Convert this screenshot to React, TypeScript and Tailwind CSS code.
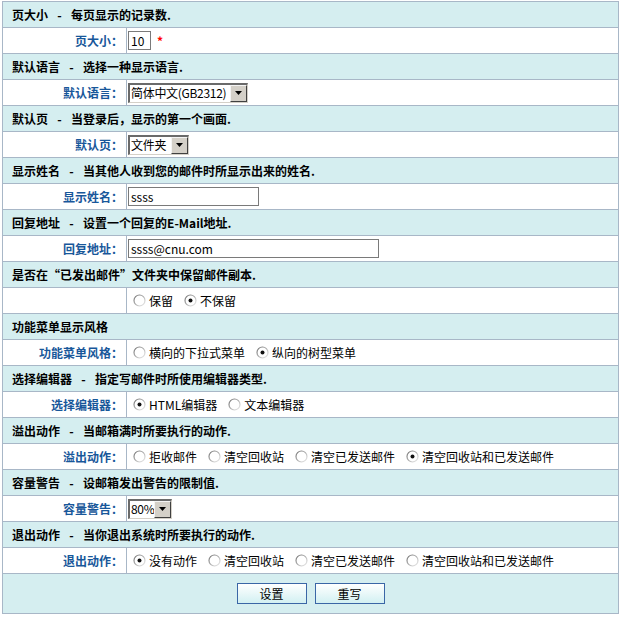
import React from "react";

const Radio = ({ checked }: { checked?: boolean }) => (
  <svg width="13" height="13" viewBox="0 0 13 13" className="ml-[5px] mr-[3px] shrink-0">
    <defs>
      <linearGradient id="rg" x1="0" y1="0" x2="1" y2="1">
        <stop offset="0" stopColor="#6e6e6e" />
        <stop offset="0.55" stopColor="#b8b8b8" />
        <stop offset="1" stopColor="#f0f0f0" />
      </linearGradient>
    </defs>
    <circle cx="6.5" cy="6.5" r="5.5" fill="#ffffff" stroke="url(#rg)" strokeWidth="1.2" />
    {checked && <circle cx="6.5" cy="6.5" r="2" fill="#111111" />}
  </svg>
);

const Opt = ({ label, checked }: { label: string; checked?: boolean }) => (
  <span className="flex items-center mr-[6px]">
    <Radio checked={checked} />
    <span>{label}</span>
  </span>
);

const Header = ({ title, desc }: { title: string; desc?: string }) => (
  <div className="h-[26px] border-b border-[#a8b7c7] bg-[#d5eef0] flex items-center pl-[9px] font-bold text-black">
    <span>{title}</span>
    {desc && (
      <>
        <span className="inline-block w-[23px] text-center">-</span>
        <span>{desc}</span>
      </>
    )}
  </div>
);

const Row = ({ label, children }: { label?: string; children: React.ReactNode }) => (
  <div className="h-[26px] border-b border-[#a8b7c7] flex bg-white">
    <div className="w-[124px] shrink-0 border-r border-[#a8b7c7] flex items-center justify-end pr-[3px] font-bold text-[#18579a]">
      {label ? `${label}：` : ""}
    </div>
    <div className="flex-1 flex items-center pl-[1px]">{children}</div>
  </div>
);

const Select = ({ value, w }: { value: string; w: string }) => (
  <div
    className={`${w} h-[20px] flex bg-white border-t-2 border-l-2 border-b border-r border-t-[#6a6a6a] border-l-[#6a6a6a] border-b-[#d4d0c8] border-r-[#d4d0c8]`}
  >
    <div className="flex-1 min-w-0 flex items-center pl-[1px] whitespace-nowrap tracking-[-0.3px]">{value}</div>
    <div className="w-[17px] h-[17px] shrink-0 bg-[#d4d0c8] border-t border-l border-t-[#f4f4f4] border-l-[#f4f4f4] border-b border-r border-b-[#404040] border-r-[#404040] flex items-center justify-center">
      <svg width="7" height="4" viewBox="0 0 7 4">
        <polygon points="0,0 7,0 3.5,4" fill="#000" />
      </svg>
    </div>
  </div>
);

const TextInput = ({ value, w }: { value: string; w: string }) => (
  <input
    readOnly
    defaultValue={value}
    className={`${w} h-[19px] border border-[#7a7a7a] bg-white pl-[2px] text-[12px] text-black outline-none`}
  />
);

export default function App() {
  return (
    <div
      className="bg-white w-[621px] h-[617px] pt-[1px] text-[12px] leading-none text-black"
      style={{ fontFamily: '"Noto Sans CJK SC", "Liberation Sans", sans-serif' }}
    >
      <div className="ml-[2px] w-[617px] border border-[#a8b7c7]">
        <Header title="页大小" desc="每页显示的记录数." />
        <Row label="页大小">
          <TextInput value="10" w="w-[23px]" />
          <span className="ml-[6px] text-[#ff0000] font-bold">*</span>
        </Row>

        <Header title="默认语言" desc="选择一种显示语言." />
        <Row label="默认语言">
          <Select value="简体中文(GB2312)" w="w-[120px]" />
        </Row>

        <Header title="默认页" desc="当登录后，显示的第一个画面." />
        <Row label="默认页">
          <Select value="文件夹" w="w-[61px]" />
        </Row>

        <Header title="显示姓名" desc="当其他人收到您的邮件时所显示出来的姓名." />
        <Row label="显示姓名">
          <TextInput value="ssss" w="w-[131px]" />
        </Row>

        <Header title="回复地址" desc="设置一个回复的E-Mail地址." />
        <Row label="回复地址">
          <TextInput value="ssss@cnu.com" w="w-[251px]" />
        </Row>

        <Header title="是否在“已发出邮件”文件夹中保留邮件副本." />
        <Row>
          <Opt label="保留" />
          <Opt label="不保留" checked />
        </Row>

        <Header title="功能菜单显示风格" />
        <Row label="功能菜单风格">
          <Opt label="横向的下拉式菜单" />
          <Opt label="纵向的树型菜单" checked />
        </Row>

        <Header title="选择编辑器" desc="指定写邮件时所使用编辑器类型." />
        <Row label="选择编辑器">
          <Opt label="HTML编辑器" checked />
          <Opt label="文本编辑器" />
        </Row>

        <Header title="溢出动作" desc="当邮箱满时所要执行的动作." />
        <Row label="溢出动作">
          <Opt label="拒收邮件" />
          <Opt label="清空回收站" />
          <Opt label="清空已发送邮件" />
          <Opt label="清空回收站和已发送邮件" checked />
        </Row>

        <Header title="容量警告" desc="设邮箱发出警告的限制值." />
        <Row label="容量警告">
          <Select value="80%" w="w-[44px]" />
        </Row>

        <Header title="退出动作" desc="当你退出系统时所要执行的动作." />
        <Row label="退出动作">
          <Opt label="没有动作" checked />
          <Opt label="清空回收站" />
          <Opt label="清空已发送邮件" />
          <Opt label="清空回收站和已发送邮件" />
        </Row>

        <div className="h-[39px] bg-[#d5eef0] flex items-center justify-center gap-[8px]">
          <button className="w-[70px] h-[21px] border border-[#3a66a6] bg-gradient-to-b from-white to-[#d2f0f2] text-[12px] text-black">
            设置
          </button>
          <button className="w-[70px] h-[21px] border border-[#3a66a6] bg-gradient-to-b from-white to-[#d2f0f2] text-[12px] text-black">
            重写
          </button>
        </div>
      </div>
    </div>
  );
}
